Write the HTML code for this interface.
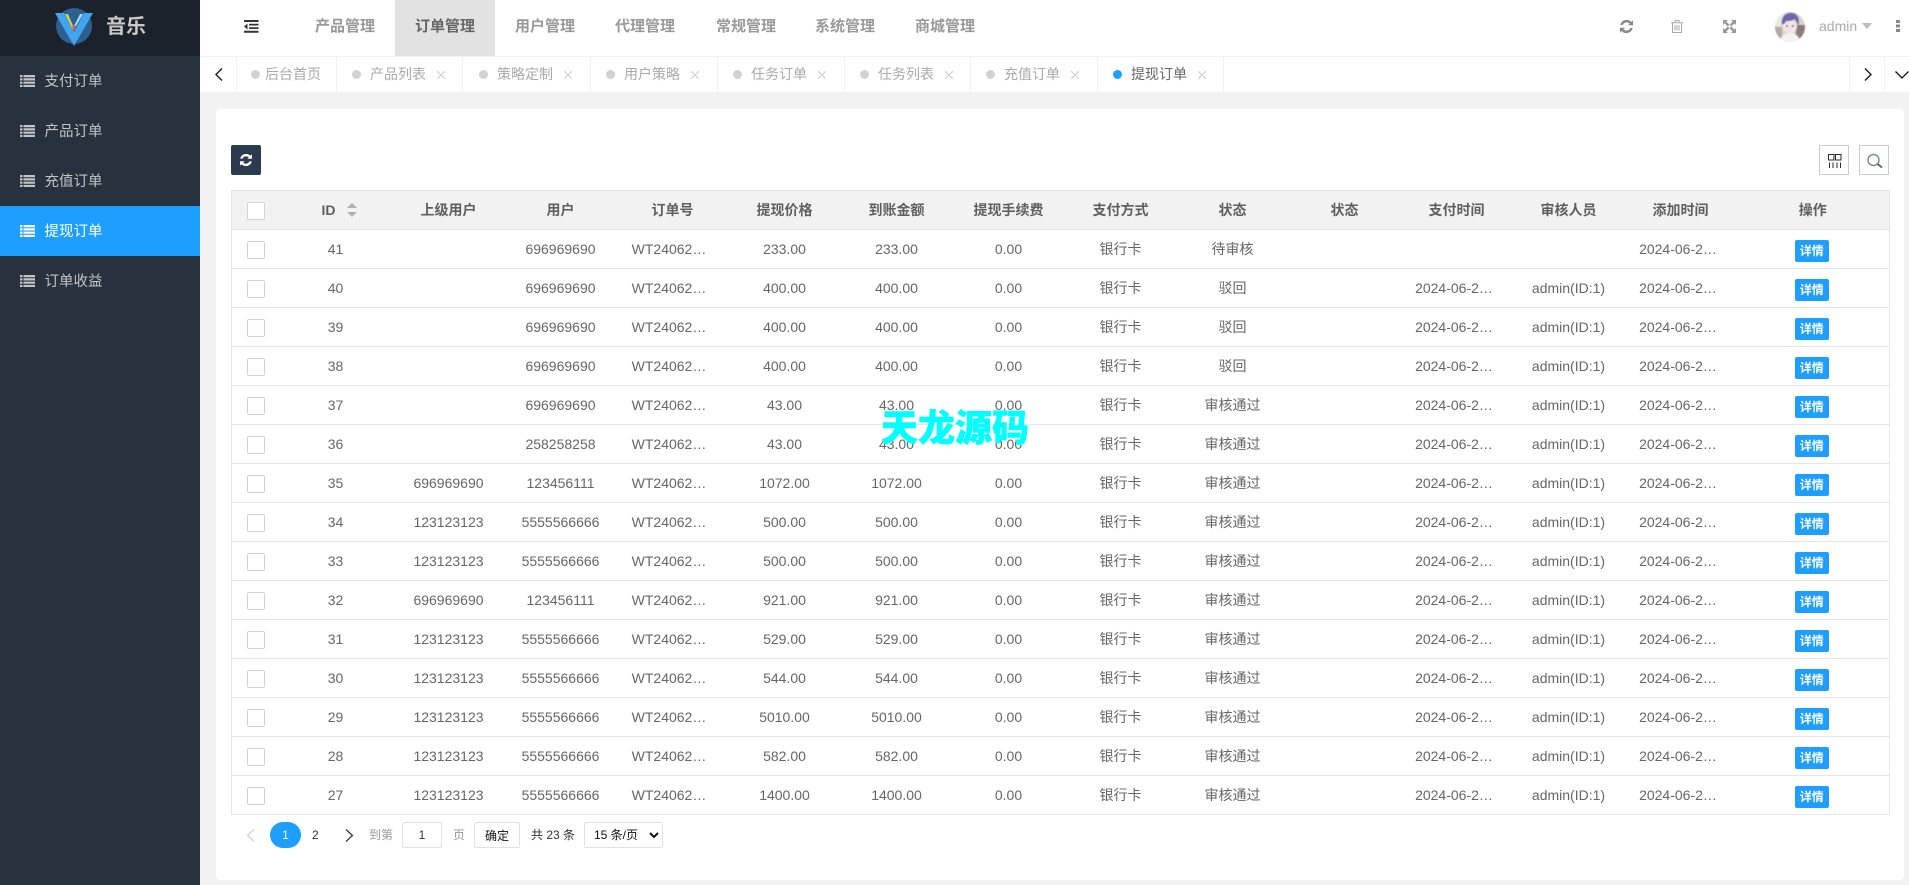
<!DOCTYPE html>
<html lang="zh">
<head>
<meta charset="utf-8">
<title>提现订单</title>
<style>
*{box-sizing:border-box}
html,body{margin:0;padding:0;width:1909px;height:885px;overflow:hidden;background:#f2f2f2;font-family:"Liberation Sans","Noto Sans CJK SC",sans-serif;font-size:14px;color:#666}
#side{position:absolute;left:0;top:0;width:200px;height:885px;background:#28323e}
#logo{position:absolute;left:0;top:0;width:200px;height:56px;background:#1b222b}
#logo span{position:absolute;left:106px;top:13px;font-size:20px;line-height:28px;font-weight:bold;color:#c8c8c8}
.mi{position:absolute;left:0;width:200px;height:50px;line-height:50px;color:#c4c4c4;font-size:14.5px}
.mi svg{position:absolute;left:20px;top:19px}
.mi span{position:absolute;left:44.5px;top:1px}
.mi.on{background:#1e9fff;color:#fff}
#top{position:absolute;left:200px;top:0;width:1709px;height:56px;background:#fff}
#top .t{position:absolute;top:0;width:100px;height:56px;line-height:54px;text-align:center;font-size:15px;font-weight:bold;color:#999}
#top .t.on{background:#e2e2e2;color:#666}
#tabs{position:absolute;left:200px;top:56px;width:1709px;height:36px;background:#fff;border-top:1px solid #f1f1f1}
.tb{position:absolute;top:0;height:35px;border-right:1px solid #f1f1f1;color:#aaa;font-size:14px;line-height:34px}
.tb i{position:absolute;top:13px;width:9px;height:9px;border-radius:50%;background:#d2d2d2}
.tb span{position:absolute;top:0;white-space:nowrap}
.tb svg{position:absolute;top:14px}
#card{position:absolute;left:216px;top:109px;width:1688px;height:771px;background:#fff;border-radius:4px}
#bt{position:absolute;left:231px;top:145px;width:30px;height:30px;background:#2b3a4e;border-radius:2px}
.tool{position:absolute;top:145px;width:30px;height:30px;border:1px solid #ccc;background:#fff}
table{position:absolute;left:231px;top:190px;width:1658px;border-collapse:collapse;table-layout:fixed;background:#fff;border:1px solid #e6e6e6}
th,td{height:39px;padding:0;text-align:center;border-top:1px solid #e6e6e6;border-bottom:1px solid #e6e6e6;font-size:14px;color:#666;white-space:nowrap;overflow:hidden}
th{background:#f2f2f2;font-weight:bold;color:#5f5f5f}
th:nth-child(2){padding-left:5px}
td:nth-child(2){padding-right:2px}
td:nth-child(5){padding-right:7px}
td:nth-child(12),td:nth-child(14){padding-right:5px}
td:last-child{padding-right:2px}
td b,th b{display:block;width:18px;height:18px;margin-left:15px;margin-top:1px;border:1px solid #d2d2d2;border-radius:2px;background:#fff}
td u{display:inline-block;text-decoration:none;width:34px;height:22px;line-height:22px;margin-top:3px;background:#1e9fff;color:#fff;font-size:12px;font-weight:bold;border-radius:2px;vertical-align:top}
.sort{display:inline-block;width:10px;height:14px;position:relative;margin-left:11px;vertical-align:-2px}
.sort:before,.sort:after{content:"";position:absolute;left:0;border:5px solid transparent}
.sort:before{top:-5px;border-bottom:5px solid #b2b2b2}
.sort:after{bottom:-5px;border-top:5px solid #b2b2b2}
#pg{position:absolute;left:0;top:0;width:1909px;height:885px;pointer-events:none}
#pg>*{position:absolute}
.box{border:1px solid #e2e2e2;border-radius:2px;background:#fff;text-align:center}
#wm{position:absolute;left:881px;top:405px;font-size:37px;line-height:48px;font-weight:900;color:#00ffff;-webkit-text-stroke:.5px #00ffff;white-space:nowrap;letter-spacing:0}
</style>
</head>
<body>
<div id="top">
<svg style="position:absolute;left:44px;top:20px" width="15" height="13" viewBox="0 0 15 13"><path fill="#333" d="M0 0h14.5v2H0zM5 3.700h9.500v1.800H5zM5 7.200h9.500V9H5zM0 10.800h14.500v2H0zM3.500 3.500v6L0 6.500z"/></svg>
<div class="t" style="left:95px">产品管理</div>
<div class="t on" style="left:195px">订单管理</div>
<div class="t" style="left:295px">用户管理</div>
<div class="t" style="left:395px">代理管理</div>
<div class="t" style="left:496px">常规管理</div>
<div class="t" style="left:595px">系统管理</div>
<div class="t" style="left:695px">商城管理</div>
<svg style="position:absolute;left:1420px;top:20px" width="13" height="13" viewBox="0 0 13 13"><path fill="#888" d="M11.400 5.200H13V.3l-1.600 1.700A6.500 6.500 0 0 0 .3 5h2.400a4.300 4.300 0 0 1 7-1.300L7.900 5.200zM1.600 7.800H0v4.900L1.600 11a6.500 6.500 0 0 0 11.100-3h-2.400a4.300 4.300 0 0 1-7 1.300l1.800-1.500z"/></svg>
<svg style="position:absolute;left:1471px;top:20px" width="12" height="13" viewBox="0 0 12 13"><path fill="none" stroke="#aaa" d="M1.500 3v9.500h9V3M0 2.800h12M4 2.500V.6h4v1.900M4 5v5.500M6 5v5.500M8 5v5.500"/></svg>
<svg style="position:absolute;left:1523px;top:20px" width="13" height="13" viewBox="0 0 13 13"><path fill="#999" d="M0 0h5L3.400 1.600 6.500 4.700 4.700 6.500 1.600 3.400 0 5zM13 0v5l-1.600-1.600-3.100 3.100-1.800-1.800 3.100-3.100L8 0zM0 13V8l1.600 1.600 3.100-3.100 1.800 1.800-3.100 3.100L5 13zM13 13H8l1.600-1.600-3.100-3.100 1.800-1.800 3.100 3.100L13 8z"/></svg>
<svg style="position:absolute;left:1575px;top:12px;filter:blur(.4px)" width="30" height="30" viewBox="0 0 30 30"><defs><clipPath id="av"><circle cx="15" cy="15" r="15"/></clipPath></defs><g clip-path="url(#av)"><rect width="30" height="30" fill="#d8d4cf"/><rect x="0" y="0" width="9" height="14" fill="#e6ecdf"/><rect x="21" y="13" width="9" height="17" fill="#8a7d78"/><rect x="0" y="15" width="7" height="15" fill="#b3aaa5"/><path fill="#f4f1f3" d="M5 30c0-6 5-9 10-9s10 3 10 9z"/><ellipse cx="15" cy="15" rx="7" ry="7" fill="#f3e4e4"/><path fill="#6f66ad" d="M7 13C6 5 10 1 16 1s9 5 7.500 12c-1.500-2-2.500-4-3.500-6-3 2-6 2-9 2-1 2-2 3-4 4z"/><circle cx="12" cy="14" r=".9" fill="#5a5080"/><circle cx="18" cy="14" r=".9" fill="#5a5080"/></g></svg>
<span style="position:absolute;left:1619px;top:18px;color:#aaa;line-height:16px;font-size:14px">admin</span>
<span style="position:absolute;left:1662px;top:23px;border:5.5px solid transparent;border-top:6px solid #bbb;border-bottom:0"></span>
<svg style="position:absolute;left:1696px;top:20px" width="4" height="12" viewBox="0 0 4 12"><path fill="#888" d="M0 0h4v3H0zM0 4.500h4v3H0zM0 9h4v3H0z"/></svg>
</div>

<div id="side">
<div id="logo">
<svg style="position:absolute;left:54px;top:7px" width="40" height="41" viewBox="0 0 40 41"><circle cx="20" cy="19" r="18" fill="#2f5e90"/><path fill="#42a4ee" d="M1 6h13l6 11 6-11h13L20 39z"/><path fill="#2f5e90" d="M10 6h7l3 8 3-8h7L20 25z"/><path fill="#c8d84a" d="M11 7h3l6 14-1 2z"/><path fill="#9edcf5" d="M29 7h-3l-6 12 1 2z"/><path fill="#e2554f" d="M20 17l2 3-2 4-2-4z"/></svg>
<span>音乐</span>
</div>
<div class="mi" style="top:56px"><svg width="15" height="12" viewBox="0 0 15 12"><path fill="#c4c4c4" d="M0 0h2.500v2.200H0zM3.500 0H15v2.200H3.500zM0 3.300h2.500v2.200H0zM3.500 3.300H15v2.200H3.500zM0 6.600h2.500v2.200H0zM3.500 6.600H15v2.200H3.500zM0 9.900h2.500V12H0zM3.500 9.900H15V12H3.500z"/></svg><span>支付订单</span></div>
<div class="mi" style="top:106px"><svg width="15" height="12" viewBox="0 0 15 12"><path fill="#c4c4c4" d="M0 0h2.500v2.200H0zM3.500 0H15v2.200H3.500zM0 3.300h2.500v2.200H0zM3.500 3.300H15v2.200H3.500zM0 6.600h2.500v2.200H0zM3.500 6.600H15v2.200H3.500zM0 9.900h2.500V12H0zM3.500 9.900H15V12H3.500z"/></svg><span>产品订单</span></div>
<div class="mi" style="top:156px"><svg width="15" height="12" viewBox="0 0 15 12"><path fill="#c4c4c4" d="M0 0h2.500v2.200H0zM3.500 0H15v2.200H3.500zM0 3.300h2.500v2.200H0zM3.500 3.300H15v2.200H3.500zM0 6.600h2.500v2.200H0zM3.500 6.600H15v2.200H3.500zM0 9.900h2.500V12H0zM3.500 9.900H15V12H3.500z"/></svg><span>充值订单</span></div>
<div class="mi on" style="top:206px"><svg width="15" height="12" viewBox="0 0 15 12"><path fill="#fff" d="M0 0h2.500v2.200H0zM3.500 0H15v2.200H3.500zM0 3.300h2.500v2.200H0zM3.500 3.300H15v2.200H3.500zM0 6.600h2.500v2.200H0zM3.500 6.600H15v2.200H3.500zM0 9.900h2.500V12H0zM3.500 9.900H15V12H3.500z"/></svg><span>提现订单</span></div>
<div class="mi" style="top:256px"><svg width="15" height="12" viewBox="0 0 15 12"><path fill="#c4c4c4" d="M0 0h2.500v2.200H0zM3.500 0H15v2.200H3.500zM0 3.300h2.500v2.200H0zM3.500 3.300H15v2.200H3.500zM0 6.600h2.500v2.200H0zM3.500 6.600H15v2.200H3.500zM0 9.900h2.500V12H0zM3.500 9.900H15V12H3.500z"/></svg><span>订单收益</span></div>
</div>

<div id="tabs">
<div class="tb" style="left:0;width:37px"><svg style="left:15px;top:11px" width="8" height="13" viewBox="0 0 8 13"><path fill="none" stroke="#111" stroke-width="1.300" d="M7 .5 1 6.500l6 6"/></svg></div>
<div class="tb" style="left:37px;width:100px"><i style="left:14px"></i><span style="left:28px">后台首页</span></div>
<div class="tb" style="left:137px;width:126px"><i style="left:15px"></i><span style="left:33px">产品列表</span><svg style="left:100px" width="8" height="8" viewBox="0 0 8 8"><path stroke="#ccc" d="M0 0l8 8M8 0 0 8"/></svg></div>
<div class="tb" style="left:263px;width:128px"><i style="left:16px"></i><span style="left:34px">策略定制</span><svg style="left:101px" width="8" height="8" viewBox="0 0 8 8"><path stroke="#ccc" d="M0 0l8 8M8 0 0 8"/></svg></div>
<div class="tb" style="left:391px;width:127px"><i style="left:15px"></i><span style="left:33px">用户策略</span><svg style="left:100px" width="8" height="8" viewBox="0 0 8 8"><path stroke="#ccc" d="M0 0l8 8M8 0 0 8"/></svg></div>
<div class="tb" style="left:518px;width:127px"><i style="left:15px"></i><span style="left:33px">任务订单</span><svg style="left:100px" width="8" height="8" viewBox="0 0 8 8"><path stroke="#ccc" d="M0 0l8 8M8 0 0 8"/></svg></div>
<div class="tb" style="left:645px;width:126px"><i style="left:15px"></i><span style="left:33px">任务列表</span><svg style="left:100px" width="8" height="8" viewBox="0 0 8 8"><path stroke="#ccc" d="M0 0l8 8M8 0 0 8"/></svg></div>
<div class="tb" style="left:771px;width:127px"><i style="left:15px"></i><span style="left:33px">充值订单</span><svg style="left:100px" width="8" height="8" viewBox="0 0 8 8"><path stroke="#ccc" d="M0 0l8 8M8 0 0 8"/></svg></div>
<div class="tb" style="left:898px;width:126px;color:#666"><i style="left:15px;background:#1e9fff"></i><span style="left:33px">提现订单</span><svg style="left:100px" width="8" height="8" viewBox="0 0 8 8"><path stroke="#ccc" d="M0 0l8 8M8 0 0 8"/></svg></div>
<div class="tb" style="left:1649px;width:36px;border-left:1px solid #f1f1f1;border-right:1px solid #f1f1f1"><svg style="left:14px;top:11px" width="8" height="13" viewBox="0 0 8 13"><path fill="none" stroke="#111" stroke-width="1.300" d="M1 .5l6 6-6 6"/></svg></div>
<div class="tb" style="left:1695px;width:14px;border:0"><svg style="left:0;top:14px" width="14" height="8" viewBox="0 0 14 8"><path fill="none" stroke="#111" stroke-width="1.300" d="M.5 .5l6.500 6.500 6.500-6.500"/></svg></div>
</div>

<div id="card"></div>
<div id="bt"><svg style="position:absolute;left:9px;top:9px" width="12" height="12" viewBox="0 0 12 12"><path fill="#fff" d="M10.500 4.800H12V.2l-1.600 1.600A6 6 0 0 0 .2 4.600h2.400a3.800 3.800 0 0 1 6.200-1.100L7.200 4.800zM1.500 7.200H0v4.600l1.600-1.600a6 6 0 0 0 10.200-2.800H9.400a3.800 3.800 0 0 1-6.200 1.100l1.600-1.300z"/></svg></div>
<div class="tool" style="left:1819px"><svg style="position:absolute;left:8px;top:8px" width="14" height="14" viewBox="0 0 14 14"><path fill="none" stroke="#2a2a3a" d="M.5.5h5.500v5.500H.5zM7.500 .5H13v5.500H7.500zM1.500 8.500V14M5 8.500V14M9 8.500V14M12.500 8.500V14"/></svg></div>
<div class="tool" style="left:1859px"><svg style="position:absolute;left:7px;top:7px" width="16" height="16" viewBox="0 0 16 16"><circle cx="6.500" cy="7" r="5.500" fill="none" stroke="#5d85a6" stroke-width="1.300"/><path stroke="#666" stroke-width="2" d="M10.500 11l4.500 3.500"/></svg></div>

<table>
<colgroup><col style="width:49px"><col style="width:112px"><col style="width:112px"><col style="width:112px"><col style="width:112px"><col style="width:112px"><col style="width:112px"><col style="width:112px"><col style="width:112px"><col style="width:112px"><col style="width:112px"><col style="width:112px"><col style="width:112px"><col style="width:112px"><col style="width:153px"></colgroup>
<tr><th><b></b></th><th>ID<span class="sort"></span></th><th>上级用户</th><th>用户</th><th>订单号</th><th>提现价格</th><th>到账金额</th><th>提现手续费</th><th>支付方式</th><th>状态</th><th>状态</th><th>支付时间</th><th>审核人员</th><th>添加时间</th><th>操作</th></tr>
<tr><td><b></b></td><td>41</td><td></td><td>696969690</td><td>WT24062…</td><td>233.00</td><td>233.00</td><td>0.00</td><td>银行卡</td><td>待审核</td><td></td><td></td><td></td><td>2024-06-2…</td><td><u>详情</u></td></tr>
<tr><td><b></b></td><td>40</td><td></td><td>696969690</td><td>WT24062…</td><td>400.00</td><td>400.00</td><td>0.00</td><td>银行卡</td><td>驳回</td><td></td><td>2024-06-2…</td><td>admin(ID:1)</td><td>2024-06-2…</td><td><u>详情</u></td></tr>
<tr><td><b></b></td><td>39</td><td></td><td>696969690</td><td>WT24062…</td><td>400.00</td><td>400.00</td><td>0.00</td><td>银行卡</td><td>驳回</td><td></td><td>2024-06-2…</td><td>admin(ID:1)</td><td>2024-06-2…</td><td><u>详情</u></td></tr>
<tr><td><b></b></td><td>38</td><td></td><td>696969690</td><td>WT24062…</td><td>400.00</td><td>400.00</td><td>0.00</td><td>银行卡</td><td>驳回</td><td></td><td>2024-06-2…</td><td>admin(ID:1)</td><td>2024-06-2…</td><td><u>详情</u></td></tr>
<tr><td><b></b></td><td>37</td><td></td><td>696969690</td><td>WT24062…</td><td>43.00</td><td>43.00</td><td>0.00</td><td>银行卡</td><td>审核通过</td><td></td><td>2024-06-2…</td><td>admin(ID:1)</td><td>2024-06-2…</td><td><u>详情</u></td></tr>
<tr><td><b></b></td><td>36</td><td></td><td>258258258</td><td>WT24062…</td><td>43.00</td><td>43.00</td><td>0.00</td><td>银行卡</td><td>审核通过</td><td></td><td>2024-06-2…</td><td>admin(ID:1)</td><td>2024-06-2…</td><td><u>详情</u></td></tr>
<tr><td><b></b></td><td>35</td><td>696969690</td><td>123456111</td><td>WT24062…</td><td>1072.00</td><td>1072.00</td><td>0.00</td><td>银行卡</td><td>审核通过</td><td></td><td>2024-06-2…</td><td>admin(ID:1)</td><td>2024-06-2…</td><td><u>详情</u></td></tr>
<tr><td><b></b></td><td>34</td><td>123123123</td><td>5555566666</td><td>WT24062…</td><td>500.00</td><td>500.00</td><td>0.00</td><td>银行卡</td><td>审核通过</td><td></td><td>2024-06-2…</td><td>admin(ID:1)</td><td>2024-06-2…</td><td><u>详情</u></td></tr>
<tr><td><b></b></td><td>33</td><td>123123123</td><td>5555566666</td><td>WT24062…</td><td>500.00</td><td>500.00</td><td>0.00</td><td>银行卡</td><td>审核通过</td><td></td><td>2024-06-2…</td><td>admin(ID:1)</td><td>2024-06-2…</td><td><u>详情</u></td></tr>
<tr><td><b></b></td><td>32</td><td>696969690</td><td>123456111</td><td>WT24062…</td><td>921.00</td><td>921.00</td><td>0.00</td><td>银行卡</td><td>审核通过</td><td></td><td>2024-06-2…</td><td>admin(ID:1)</td><td>2024-06-2…</td><td><u>详情</u></td></tr>
<tr><td><b></b></td><td>31</td><td>123123123</td><td>5555566666</td><td>WT24062…</td><td>529.00</td><td>529.00</td><td>0.00</td><td>银行卡</td><td>审核通过</td><td></td><td>2024-06-2…</td><td>admin(ID:1)</td><td>2024-06-2…</td><td><u>详情</u></td></tr>
<tr><td><b></b></td><td>30</td><td>123123123</td><td>5555566666</td><td>WT24062…</td><td>544.00</td><td>544.00</td><td>0.00</td><td>银行卡</td><td>审核通过</td><td></td><td>2024-06-2…</td><td>admin(ID:1)</td><td>2024-06-2…</td><td><u>详情</u></td></tr>
<tr><td><b></b></td><td>29</td><td>123123123</td><td>5555566666</td><td>WT24062…</td><td>5010.00</td><td>5010.00</td><td>0.00</td><td>银行卡</td><td>审核通过</td><td></td><td>2024-06-2…</td><td>admin(ID:1)</td><td>2024-06-2…</td><td><u>详情</u></td></tr>
<tr><td><b></b></td><td>28</td><td>123123123</td><td>5555566666</td><td>WT24062…</td><td>582.00</td><td>582.00</td><td>0.00</td><td>银行卡</td><td>审核通过</td><td></td><td>2024-06-2…</td><td>admin(ID:1)</td><td>2024-06-2…</td><td><u>详情</u></td></tr>
<tr><td><b></b></td><td>27</td><td>123123123</td><td>5555566666</td><td>WT24062…</td><td>1400.00</td><td>1400.00</td><td>0.00</td><td>银行卡</td><td>审核通过</td><td></td><td>2024-06-2…</td><td>admin(ID:1)</td><td>2024-06-2…</td><td><u>详情</u></td></tr>
</table>

<div id="pg">
<svg style="left:246px;top:829px" width="9" height="13" viewBox="0 0 9 13"><path fill="none" stroke="#d2d2d2" stroke-width="1.200" d="M8 .5 1.500 6.500 8 12.500"/></svg>
<div style="left:270px;top:822px;width:31px;height:26px;border-radius:13px;background:#1e9fff;color:#fff;text-align:center;line-height:26px;font-size:12px">1</div>
<div style="left:312px;top:822px;line-height:26px;font-size:12px;color:#333">2</div>
<svg style="left:345px;top:829px" width="9" height="13" viewBox="0 0 9 13"><path fill="none" stroke="#333" stroke-width="1.200" d="M1 .5 7.500 6.500 1 12.500"/></svg>
<div style="left:369px;top:822px;line-height:26px;font-size:12px;color:#999">到第</div>
<div class="box" style="left:402px;top:822px;width:40px;height:26px;line-height:24px;font-size:12px;color:#333">1</div>
<div style="left:453px;top:822px;line-height:26px;font-size:12px;color:#999">页</div>
<div class="box" style="left:474px;top:822px;width:46px;height:26px;line-height:26px;font-size:12px;color:#111">确定</div>
<div style="left:531px;top:822px;line-height:26px;font-size:12px;color:#333">共 23 条</div>
<div class="box" style="left:584px;top:822px;width:79px;height:26px;line-height:24px;font-size:12px;color:#111;text-align:left;padding-left:9px">15 条/页</div>
<svg style="left:649px;top:832px" width="10" height="7" viewBox="0 0 10 7"><path fill="none" stroke="#111" stroke-width="2" d="M1 1l4 4 4-4"/></svg>
</div>
<div id="wm">天龙源码</div>
</body>
</html>
